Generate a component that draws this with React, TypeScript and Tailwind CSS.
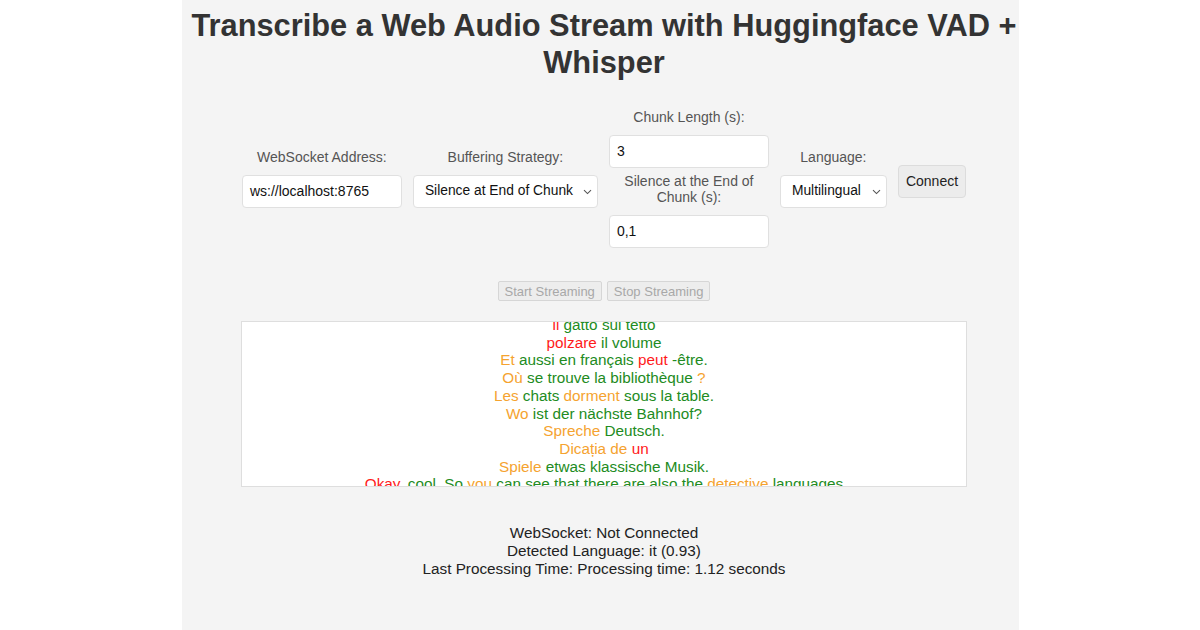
import React from "react";

type Seg = [string, "r" | "o" | "g"];

const COLORS: Record<string, string> = {
  r: "text-[#ff1a1a]",
  o: "text-[#f5a330]",
  g: "text-[#228b22]",
};

const LINES: Seg[][] = [
  [["il", "r"], ["gatto sul tetto", "g"]],
  [["polzare", "r"], ["il volume", "g"]],
  [["Et", "o"], ["aussi en français", "g"], ["peut", "r"], ["-être.", "g"]],
  [["Où", "o"], ["se trouve la bibliothèque", "g"], ["?", "o"]],
  [["Les", "o"], ["chats", "g"], ["dorment", "o"], ["sous la table.", "g"]],
  [["Wo", "o"], ["ist der nächste Bahnhof?", "g"]],
  [["Spreche", "o"], ["Deutsch.", "g"]],
  [["Dicația de", "o"], ["un", "r"]],
  [["Spiele", "o"], ["etwas klassische Musik.", "g"]],
  [
    ["Okay,", "r"],
    ["cool. So", "g"],
    ["you", "o"],
    ["can see that there are also the", "g"],
    ["detective", "o"],
    ["languages", "g"],
  ],
];

function Chevron() {
  return (
    <svg width="9" height="6" viewBox="0 0 9 6" className="shrink-0">
      <path d="M1 1.2 L4.5 4.6 L8 1.2" fill="none" stroke="#555" strokeWidth="1.1" />
    </svg>
  );
}

function Label({ children }: { children: React.ReactNode }) {
  return (
    <div className="text-[14px] leading-[16px] text-[#555] text-center mb-[10px]">{children}</div>
  );
}

function TextBox({ value }: { value: string }) {
  return (
    <div className="h-[33px] w-[160px] bg-white border border-[#e0e0e0] rounded-[4px] pl-[7px] flex items-center text-[14px] text-[#111]">
      {value}
    </div>
  );
}

function SelectBox({ value, width }: { value: string; width: string }) {
  return (
    <div
      className={`h-[33px] ${width} bg-white border border-[#e0e0e0] rounded-[4px] pl-[11px] pr-[5px] flex items-center justify-between text-[13.8px] text-[#111]`}
    >
      <span className="whitespace-nowrap">{value}</span>
      <Chevron />
    </div>
  );
}

export default function App() {
  return (
    <div className="min-h-[630px] bg-white" style={{ fontFamily: '"Liberation Sans", Arial, sans-serif' }}>
      <div className="mx-auto w-[837px] min-h-[630px] bg-[#f4f4f4] pl-[8px] pt-[7px] pb-[40px] flex flex-col items-center">
        <h1 className="text-[30.8px] leading-[37px] font-bold text-[#333] text-center w-[829px]">
          Transcribe a Web Audio Stream with Huggingface VAD + Whisper
        </h1>

        <div className="mt-[28px] flex items-center gap-[11px]">
          <div className="flex flex-col items-center">
            <Label>WebSocket Address:</Label>
            <TextBox value="ws://localhost:8765" />
          </div>
          <div className="flex flex-col items-center">
            <Label>Buffering Strategy:</Label>
            <SelectBox value="Silence at End of Chunk" width="w-[185px]" />
          </div>
          <div className="flex flex-col items-center w-[160px]">
            <Label>Chunk Length (s):</Label>
            <TextBox value="3" />
            <div className="mt-[5px]">
              <Label>Silence at the End of Chunk (s):</Label>
            </div>
            <TextBox value="0,1" />
          </div>
          <div className="flex flex-col items-center">
            <Label>Language:</Label>
            <SelectBox value="Multilingual" width="w-[107px]" />
          </div>
          <button className="mt-[5px] h-[33px] px-[7px] bg-[#ececec] border border-[#dcdcdc] rounded-[4px] text-[14px] text-[#222]">
            Connect
          </button>
        </div>

        <div className="mt-[33px] flex gap-[5px]">
          <button
            disabled
            className="h-[20px] px-[6px] bg-[#ededed] border border-[#d6d6d6] rounded-[2px] text-[13px] leading-[15px] text-[#a8a8a8]"
          >
            Start Streaming
          </button>
          <button
            disabled
            className="h-[20px] px-[6px] bg-[#ededed] border border-[#d6d6d6] rounded-[2px] text-[13px] leading-[15px] text-[#a8a8a8]"
          >
            Stop Streaming
          </button>
        </div>

        <div className="mt-[20px] w-[726px] h-[166px] bg-white border border-[#dedede] overflow-hidden">
          <div className="-mt-[6px] flex flex-col items-center text-[15.3px] leading-[17.7px]">
            {LINES.map((line, i) => (
              <div key={i} className="whitespace-nowrap">
                {line.map(([t, c], j) => (
                  <span key={j} className={COLORS[c]}>
                    {j > 0 ? " " : ""}
                    {t}
                  </span>
                ))}
              </div>
            ))}
          </div>
        </div>

        <div className="mt-[37px] flex flex-col items-center text-[15.3px] leading-[18px] text-[#222]">
          <div>WebSocket: Not Connected</div>
          <div>Detected Language: it (0.93)</div>
          <div>Last Processing Time: Processing time: 1.12 seconds</div>
        </div>
      </div>
    </div>
  );
}
